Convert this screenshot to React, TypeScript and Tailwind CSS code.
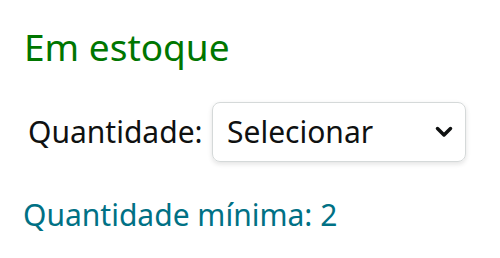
export default function App() {
  return (
    <div className="w-[500px] h-[258px] bg-white pl-[23px] pt-[27px] font-['Noto_Sans',sans-serif]">
      <div className="ml-[1px] text-[37px] leading-[40px] text-[#007600]">Em estoque</div>

      <div className="mt-[35px] flex items-center">
        <label className="ml-[5px] text-[30px] leading-[40px] text-[#0f1111]">Quantidade:</label>
        <div className="ml-auto mr-[34px] w-[254px] h-[60px] rounded-[8px] border border-[#d5d9d9] shadow-[0_2px_5px_rgba(15,17,17,0.12)] flex items-center justify-between pl-[14px] pr-[12px]">
          <span className="text-[30px] leading-[40px] text-[#0f1111]">Selecionar</span>
          <svg width="18" height="12" viewBox="0 0 18 12" fill="none">
            <path d="M2.5 2.5l6.5 6.5 6.5-6.5" stroke="#0f1111" strokeWidth="3.5" strokeLinecap="round" strokeLinejoin="round" />
          </svg>
        </div>
      </div>

      <div className="mt-[35px] text-[30px] leading-[36px] text-[#007185]">Quantidade mínima: 2</div>
    </div>
  );
}
